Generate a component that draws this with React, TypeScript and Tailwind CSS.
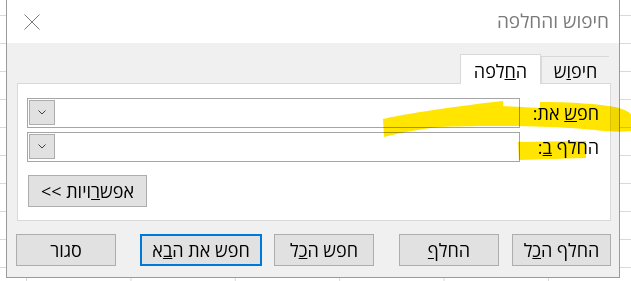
import React from 'react';

const Chevron = () => (
  <svg width="8" height="5" viewBox="0 0 8 5" fill="none">
    <polyline points="0.5,0.5 4,4 7.5,0.5" stroke="#404040" strokeWidth="1" />
  </svg>
);

const Combo = () => (
  <div className="w-[493px] h-[30px] border border-[#a5a5a5] bg-white flex justify-end">
    <div className="w-[26px] h-[25px] mt-[1px] ml-[1px] border border-[#adadad] bg-[#e1e1e1] flex items-center justify-center">
      <Chevron />
    </div>
  </div>
);

const Btn: React.FC<{ w: string; primary?: boolean; children: React.ReactNode }> = ({ w, primary, children }) => (
  <button
    className={
      primary
        ? `${w} h-[32px] border-2 border-[#0078d7] bg-[#e1e1e1] text-[18px] text-black flex items-center justify-center`
        : `${w} h-[32px] border border-[#adadad] bg-[#e1e1e1] text-[18px] text-black flex items-center justify-center`
    }
  >
    {children}
  </button>
);

export default function App() {
  return (
    <div
      className="relative w-[631px] h-[281px] overflow-hidden bg-white bg-[image:linear-gradient(to_bottom,#d9d9d9_1px,transparent_1px),linear-gradient(to_right,#d9d9d9_1px,transparent_1px)] bg-[size:100%_28px,104.4px_100%] bg-[position:0_15px,26px_0]"
      style={{ fontFamily: '"Open Sans", "Liberation Sans", sans-serif' }}
    >
      {/* Dialog */}
      <div dir="rtl" className="ml-[6px] w-[614px] h-[278px] border-x border-b border-[#9a9a9a] bg-[#f0f0f0] flex flex-col">
        {/* Title bar */}
        <div className="h-[43px] bg-white flex items-center justify-between pr-[10px] pl-[17px]">
          <span className="text-[19px] text-[#7a7a7a]">חיפוש והחלפה</span>
          <svg width="16" height="16" viewBox="0 0 16 16">
            <path d="M0.5 0.5 L15.5 15.5 M15.5 0.5 L0.5 15.5" stroke="#7a7a7a" strokeWidth="1" />
          </svg>
        </div>

        <div className="pt-[11px] pr-[8px] pl-[10px]">
          {/* Tabs */}
          <div className="flex items-end -mb-px relative z-10 pr-[2px]">
            <div className="w-[68px] h-[27px] mb-px border-t border-l border-[#d9d9d9] flex items-center justify-center pt-[2px] text-[18px] text-black">
              <span>
                חיפ<span className="underline">ו</span>ש
              </span>
            </div>
            <div className="w-[81px] h-[30px] bg-white border-x border-t border-[#d9d9d9] flex items-center justify-center pt-[3px] text-[18px] text-black">
              <span>
                ה<span className="underline">ח</span>לפה
              </span>
            </div>
          </div>

          {/* Panel */}
          <div className="h-[138px] bg-white border border-[#d9d9d9] pt-[14px] pl-[9px] pr-[11px] text-[18px] text-black">
            <div className="flex items-center">
              <div className="flex-1">
                חפ<span className="underline">ש</span> את:
              </div>
              <Combo />
            </div>
            <div className="flex items-center mt-[4px]">
              <div className="flex-1">
                החלף <span className="underline">ב</span>:
              </div>
              <Combo />
            </div>
            <div className="flex justify-end pl-[1px] mt-[13px]">
              <Btn w="w-[119px]">
                <span>
                  אפש<span className="underline">ר</span>ויות &gt;&gt;
                </span>
              </Btn>
            </div>
          </div>
        </div>

        {/* Bottom buttons */}
        <div className="flex mt-[13px] pr-[8px] pl-[9px]">
          <Btn w="w-[99px]">
            <span>
              החלף ה<span className="underline">כ</span>ל
            </span>
          </Btn>
          <div className="w-[13px]" />
          <Btn w="w-[100px]">
            <span>
              החל<span className="underline">ף</span>
            </span>
          </Btn>
          <div className="w-[25px]" />
          <Btn w="w-[100px]">
            <span>
              חפש ה<span className="underline">כ</span>ל
            </span>
          </Btn>
          <div className="w-[12px]" />
          <Btn w="w-[122px]" primary>
            <span>
              חפש את ה<span className="underline">ב</span>א
            </span>
          </Btn>
          <div className="w-[24px]" />
          <Btn w="w-[100px]">סגור</Btn>
        </div>
      </div>

      {/* Highlighter marks */}
      <svg
        className="absolute inset-0 pointer-events-none mix-blend-multiply"
        width="631"
        height="281"
        viewBox="0 0 631 281"
      >
        <path
          d="M383 119 C400 115 440 108 503 101 L503 106 L540 108 L540 102 C570 102 600 104 615 107 C624 109 629 112 631 114 L631 131 C615 133 600 130 570 128 C540 126 480 125 440 127 C420 129 400 133 384 137 Z"
          fill="#ffe500"
        />
        <path d="M518 142 L586 141 L586 158 L519 160 Z" fill="#ffe500" />
      </svg>
    </div>
  );
}
